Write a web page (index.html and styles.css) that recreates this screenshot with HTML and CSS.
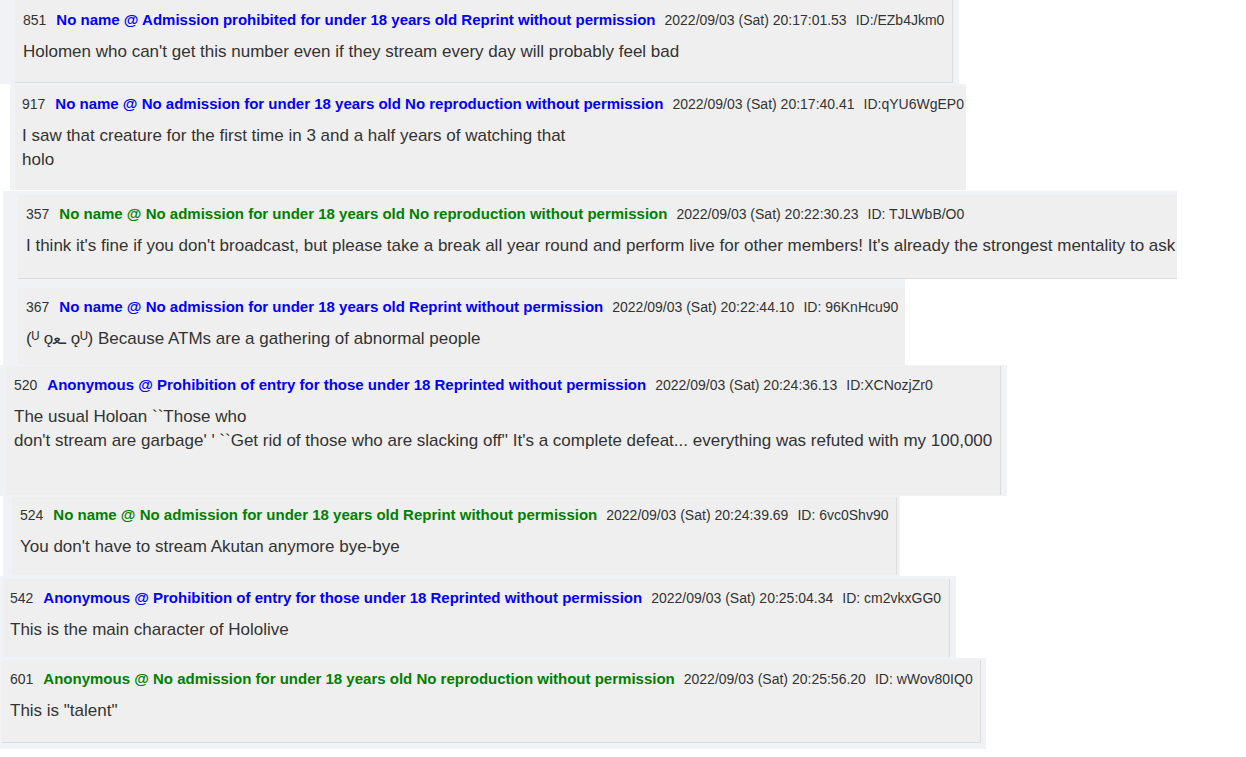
FILE: index.html
```html
<!DOCTYPE html>
<html lang="en">
<head>
<meta charset="utf-8">
<title>Thread replies</title>
<link rel="stylesheet" href="styles.css">
</head>
<body>
<main class="collage">
  <section class="shot s1">
    <article class="post p1 bb br">
      <header class="meta"><span class="num">851</span><span class="name blue">No name @ Admission prohibited for under 18 years old Reprint without permission</span><span class="date">2022/09/03 (Sat) 20:17:01.53</span><span class="uid">ID:/EZb4Jkm0</span></header>
      <p class="body">Holomen who can't get this number even if they stream every day will probably feel bad</p>
    </article>
  </section>
  <section class="shot s2">
    <article class="post p2">
      <header class="meta"><span class="num">917</span><span class="name blue">No name @ No admission for under 18 years old No reproduction without permission</span><span class="date">2022/09/03 (Sat) 20:17:40.41</span><span class="uid">ID:qYU6WgEP0</span></header>
      <p class="body">I saw that creature for the first time in 3 and a half years of watching that<br>holo</p>
    </article>
  </section>
  <section class="shot s3">
    <article class="post p3 bb">
      <header class="meta"><span class="num">357</span><span class="name green">No name @ No admission for under 18 years old No reproduction without permission</span><span class="date">2022/09/03 (Sat) 20:22:30.23</span><span class="uid">ID: TJLWbB/O0</span></header>
      <p class="body">I think it's fine if you don't broadcast, but please take a break all year round and perform live for other members! It's already the strongest mentality to ask</p>
    </article>
  </section>
  <section class="shot s4">
    <article class="post p4">
      <header class="meta"><span class="num">367</span><span class="name blue">No name @ No admission for under 18 years old Reprint without permission</span><span class="date">2022/09/03 (Sat) 20:22:44.10</span><span class="uid">ID: 96KnHcu90</span></header>
      <p class="body">(ᵁ ǫـﻌ ǫᵁ) Because ATMs are a gathering of abnormal people</p>
    </article>
  </section>
  <section class="shot s5">
    <article class="post p5 br">
      <header class="meta"><span class="num">520</span><span class="name blue">Anonymous @ Prohibition of entry for those under 18 Reprinted without permission</span><span class="date">2022/09/03 (Sat) 20:24:36.13</span><span class="uid">ID:XCNozjZr0</span></header>
      <p class="body">The usual Holoan ``Those who<br>don't stream are garbage' ' ``Get rid of those who are slacking off'' It's a complete defeat... everything was refuted with my 100,000</p>
    </article>
  </section>
  <section class="shot s6">
    <article class="post p6 br">
      <header class="meta"><span class="num">524</span><span class="name green">No name @ No admission for under 18 years old Reprint without permission</span><span class="date">2022/09/03 (Sat) 20:24:39.69</span><span class="uid">ID: 6vc0Shv90</span></header>
      <p class="body">You don't have to stream Akutan anymore bye-bye</p>
    </article>
  </section>
  <section class="shot s7">
    <article class="post p7 br">
      <header class="meta"><span class="num">542</span><span class="name blue">Anonymous @ Prohibition of entry for those under 18 Reprinted without permission</span><span class="date">2022/09/03 (Sat) 20:25:04.34</span><span class="uid">ID: cm2vkxGG0</span></header>
      <p class="body">This is the main character of Hololive</p>
    </article>
  </section>
  <section class="shot s8">
    <article class="post p8 br bb">
      <header class="meta"><span class="num">601</span><span class="name green">Anonymous @ No admission for under 18 years old No reproduction without permission</span><span class="date">2022/09/03 (Sat) 20:25:56.20</span><span class="uid">ID: wWov80IQ0</span></header>
      <p class="body">This is "talent"</p>
    </article>
  </section>
</main>
</body>
</html>
```
FILE: styles.css
```css
* { box-sizing: border-box; }

html, body {
  margin: 0;
  padding: 0;
  background: #ffffff;
}

body {
  font-family: "Liberation Sans", Arial, sans-serif;
  color: #333333;
}

.collage {
  display: flex;
  flex-direction: column;
  align-items: flex-start;
}

.shot {
  background: #f1f2f6;
  display: flex;
}

.post {
  flex: 1;
  background: #efefef;
  padding: 10px 0 0 8px;
  overflow: hidden;
  white-space: nowrap;
}

.bb { border-bottom: 1px solid #dcdcdc; }
.br { border-right: 1px solid #dcdcdc; }

.meta {
  display: flex;
  align-items: baseline;
  height: 18px;
  line-height: 18px;
  font-size: 14px;
  color: #333333;
}

.num { margin-right: 10px; }
.name { font-weight: bold; font-size: 15px; margin-right: 9px; }
.date { margin-right: 9px; }

.blue { color: #0000ff; }
.green { color: #008000; }

.body {
  margin: 11px 0 0 0;
  font-size: 17px;
  line-height: 24px;
  color: #333333;
}

/* individual cropped screenshots */
.s1 { width: 959px; height: 84px; padding: 0 6px 1px 15px; }
.p1 { padding-top: 11px; }

.s2 { width: 956px; height: 106px; margin-left: 10px; padding: 2px 0 0 5px; }
.p2 { padding-top: 9px; padding-left: 7px; }

.s3 { width: 1174px; height: 88px; margin-left: 3px; margin-top: 1px; padding: 4px 0 0 15px; }

.s4 { width: 902px; height: 86px; margin-left: 3px; padding: 9px 0 0 15px; }

.s5 { width: 1007px; height: 131px; padding: 1px 6px 1px 6px; }

.s6 { width: 897px; height: 80px; margin-left: 3px; padding: 1px 3px 1px 9px; }
.p6 { padding-top: 9px; }

.s7 { width: 956px; height: 82px; padding: 3px 6px 1px 3px; }
.p7 { padding-left: 7px; }

.s8 { width: 986px; height: 91px; padding: 2px 5px 6px 2px; }
```
